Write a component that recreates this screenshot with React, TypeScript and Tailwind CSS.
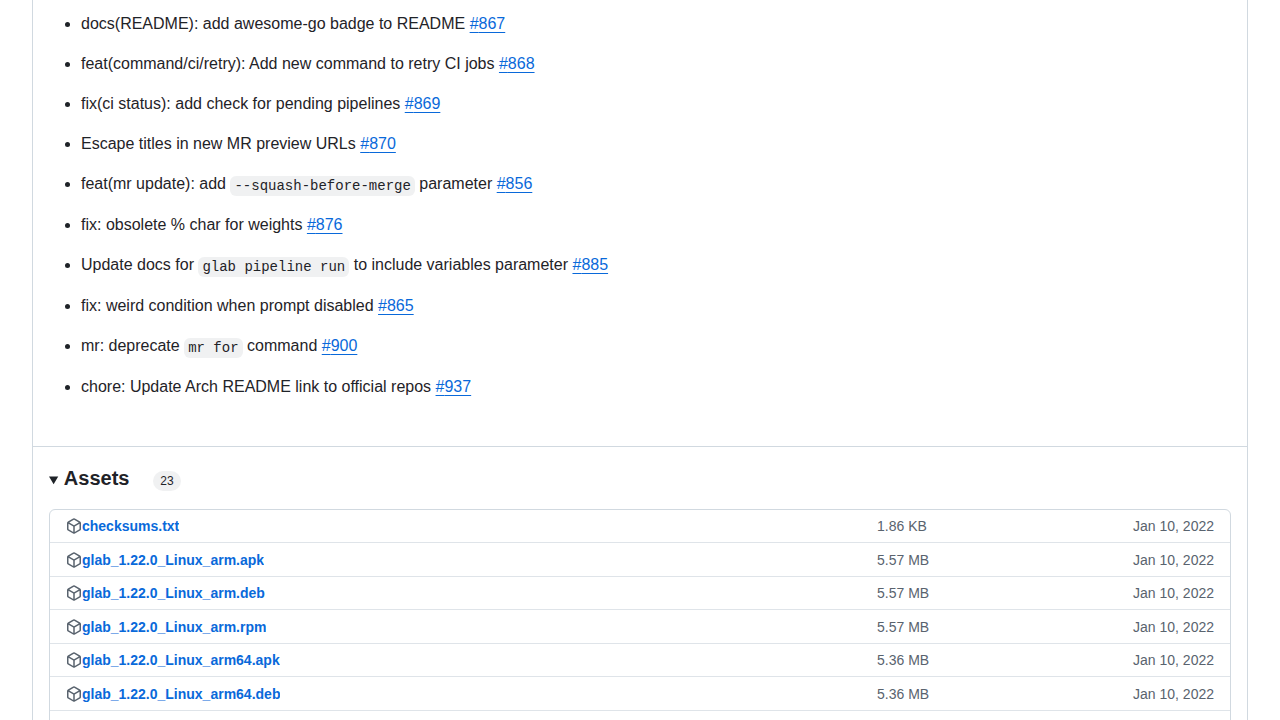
import type { ReactNode } from "react";

type Change = { text: ReactNode; issue: number };
type Asset = { name: string; size: string };

function Code({ children }: { children: ReactNode }) {
  return (
    <code className="rounded-md bg-[#818b981f] px-1 py-[2px] align-[-1px] font-['Liberation_Mono',monospace] text-[14px]">
      {children}
    </code>
  );
}

const changes: Change[] = [
  { text: "docs(README): add awesome-go badge to README", issue: 867 },
  { text: "feat(command/ci/retry): Add new command to retry CI jobs", issue: 868 },
  { text: "fix(ci status): add check for pending pipelines", issue: 869 },
  { text: "Escape titles in new MR preview URLs", issue: 870 },
  {
    text: (
      <>
        feat(mr update): add <Code>--squash-before-merge</Code> parameter
      </>
    ),
    issue: 856,
  },
  { text: "fix: obsolete % char for weights", issue: 876 },
  {
    text: (
      <>
        Update docs for <Code>glab pipeline run</Code> to include variables parameter
      </>
    ),
    issue: 885,
  },
  { text: "fix: weird condition when prompt disabled", issue: 865 },
  {
    text: (
      <>
        mr: deprecate <Code>mr for</Code> command
      </>
    ),
    issue: 900,
  },
  { text: "chore: Update Arch README link to official repos", issue: 937 },
];

const assets: Asset[] = [
  { name: "checksums.txt", size: "1.86 KB" },
  { name: "glab_1.22.0_Linux_arm.apk", size: "5.57 MB" },
  { name: "glab_1.22.0_Linux_arm.deb", size: "5.57 MB" },
  { name: "glab_1.22.0_Linux_arm.rpm", size: "5.57 MB" },
  { name: "glab_1.22.0_Linux_arm64.apk", size: "5.36 MB" },
  { name: "glab_1.22.0_Linux_arm64.deb", size: "5.36 MB" },
  { name: "glab_1.22.0_Linux_arm64.rpm", size: "5.36 MB" },
];

function PackageIcon() {
  return (
    <svg aria-hidden="true" viewBox="0 0 16 16" className="size-4 shrink-0 fill-[#59636e]">
      <path d="m8.878.392 5.25 3.045c.54.314.872.89.872 1.514v6.098a1.75 1.75 0 0 1-.872 1.514l-5.25 3.045a1.75 1.75 0 0 1-1.756 0l-5.25-3.045A1.75 1.75 0 0 1 1 11.049V4.951c0-.624.332-1.201.872-1.514L7.122.392a1.75 1.75 0 0 1 1.756 0ZM7.875 1.69l-4.63 2.685L8 7.133l4.755-2.758-4.63-2.685a.248.248 0 0 0-.25 0ZM2.5 5.677v5.372c0 .09.047.171.125.216l4.625 2.683V8.432Zm6.25 8.271 4.625-2.683a.25.25 0 0 0 .125-.216V5.677L8.75 8.432Z" />
    </svg>
  );
}

export default function App() {
  return (
    <main className="bg-white px-8 font-['Liberation_Sans',Arial,sans-serif] text-base text-[#1f2328]">
      <article className="border-x border-[#d1d9e0]">
        <ul className="flex list-disc flex-col gap-4 pt-3 pr-4 pb-[47px] pl-12">
          {changes.map(({ text, issue }) => (
            <li key={issue}>
              {text}{" "}
              <a href={`#${issue}`} className="text-[#0969da] underline underline-offset-[3px]">
                #{issue}
              </a>
            </li>
          ))}
        </ul>
        <details open className="border-t border-[#d1d9e0] px-4 pt-4 pb-4">
          <summary className="mb-4 cursor-pointer text-sm">
            <h2 className="mr-5 inline text-xl leading-[30px] font-bold">Assets</h2>{" "}
            <span className="inline-block rounded-full bg-[#818b981f] px-[7px] text-xs leading-5">23</span>
          </summary>
          <div className="rounded-md border border-[#d1d9e0]">
            <table aria-label="Assets" className="w-full table-fixed border-separate border-spacing-0 text-sm">
              <tbody>
                {assets.map(({ name, size }) => (
                  <tr
                    key={name}
                    className="h-[33px] even:h-[34px] *:border-[#d1d9e0]/70 not-last:*:border-b"
                  >
                    <td className="w-[70%] pl-4">
                      <div className="flex items-center">
                        <PackageIcon />
                        <a href={`#${name}`} className="truncate font-bold text-[#0969da]">
                          {name}
                        </a>
                      </div>
                    </td>
                    <td className="pl-px text-[#59636e]">{size}</td>
                    <td className="pr-4 text-right text-[#59636e]">
                      <time dateTime="2022-01-10">Jan 10, 2022</time>
                    </td>
                  </tr>
                ))}
              </tbody>
            </table>
          </div>
        </details>
      </article>
    </main>
  );
}
